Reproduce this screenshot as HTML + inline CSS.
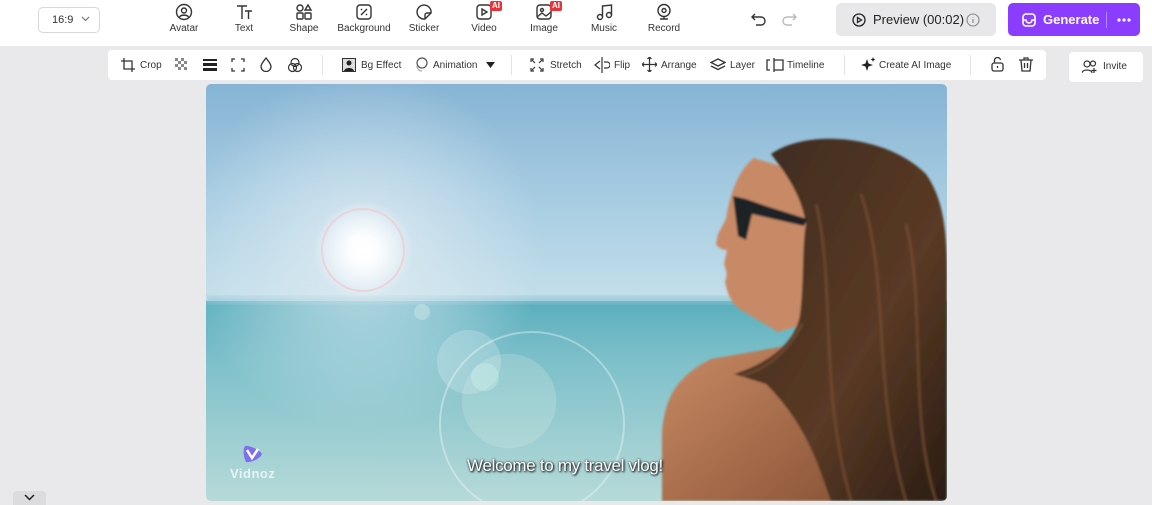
<!DOCTYPE html>
<html><head><meta charset="utf-8">
<style>
*{margin:0;padding:0;box-sizing:border-box}
body{width:1152px;height:505px;overflow:hidden;background:#e9e9eb;font-family:"Liberation Sans",sans-serif;color:#222;position:relative}
.top{position:absolute;left:0;top:0;width:1152px;height:46px;background:#fff}
.ratio{position:absolute;left:38px;top:7px;width:62px;height:26px;border:1px solid #d8d8dc;border-radius:5px;font-size:11px;line-height:24px;padding-left:13px;color:#333}
.ratio svg{position:absolute;right:9px;top:8px}
.tool{position:absolute;top:3px;text-align:center;font-size:10px;color:#333;width:60px;margin-left:-30px}
.tool svg{display:block;margin:0 auto 2px}
.ai{position:absolute;top:-2px;left:36px;background:#e8333b;color:#fff;font-size:8px;font-weight:bold;padding:0 2px;border-radius:2px;line-height:10px}
.prev{position:absolute;left:836px;top:3px;width:160px;height:33px;background:#e8e8ea;border-radius:5px;font-size:13px;line-height:33px;color:#222}
.gen{position:absolute;left:1008px;top:3px;width:132px;height:33px;background:#8b3dff;border-radius:5px;color:#fff;font-size:13px;font-weight:bold;line-height:33px}
.tb{position:absolute;left:108px;top:50px;width:938px;height:30px;background:#fff;border-radius:4px;font-size:10px;color:#333}
.tb span{position:absolute;top:10px;white-space:nowrap}
.tb svg{position:absolute}
.sep{position:absolute;top:5px;width:1px;height:20px;background:#e2e2e4}
.inv{position:absolute;left:1069px;top:52px;width:74px;height:30px;background:#fff;border-radius:4px;font-size:10px;line-height:30px;padding-left:34px;color:#333}
.img{position:absolute;left:206px;top:84px;width:741px;height:417px;border-radius:5px;overflow:hidden}
.cap{position:absolute;left:467px;top:456px;font-size:17px;color:#fff;text-shadow:1px 1px 2px #000,0 0 2px #333;letter-spacing:-0.3px}
.vid{position:absolute;left:230px;top:466px;font-size:13px;color:#e8f3f3;font-weight:bold;letter-spacing:0.5px}
.down{position:absolute;left:13px;top:491px;width:33px;height:14px;background:#dcdcdf;border-radius:4px 4px 0 0}
</style></head><body>
<div class="top">
 <div class="ratio">16:9<svg width="9" height="6" viewBox="0 0 9 6"><path d="M1 1l3.5 3.5L8 1" stroke="#666" fill="none"/></svg></div>
 <div class="tool" style="left:184px"><svg width="18" height="18" viewBox="0 0 18 18" fill="none" stroke="#333" stroke-width="1.4"><circle cx="9" cy="9" r="7.5"/><circle cx="9" cy="7.5" r="2.5"/><path d="M4.5 14c1.5-2.5 7.5-2.5 9 0"/></svg>Avatar</div>
 <div class="tool" style="left:244px"><svg width="18" height="18" viewBox="0 0 18 18" fill="none" stroke="#333" stroke-width="1.4"><path d="M2 3h10M7 3v13M10 8h7M13.5 8v8"/></svg>Text</div>
 <div class="tool" style="left:304px"><svg width="18" height="18" viewBox="0 0 18 18" fill="none" stroke="#333" stroke-width="1.4"><circle cx="5" cy="5" r="3"/><path d="M13 2l3 5h-6z"/><rect x="2" y="10" width="6" height="6" rx="1"/><rect x="10" y="10" width="6" height="6" rx="1"/></svg>Shape</div>
 <div class="tool" style="left:364px"><svg width="18" height="18" viewBox="0 0 18 18" fill="none" stroke="#333" stroke-width="1.4"><rect x="2" y="2" width="14" height="14" rx="3"/><path d="M6 12l6-6M6 7l1-1M11 12l1-1"/></svg>Background</div>
 <div class="tool" style="left:424px"><svg width="18" height="18" viewBox="0 0 18 18" fill="none" stroke="#333" stroke-width="1.4"><path d="M16 10A7 7 0 1 0 10 16zM16 10h-4a2 2 0 0 0-2 2v4"/></svg>Sticker</div>
 <div class="tool" style="left:484px"><svg width="18" height="18" viewBox="0 0 18 18" fill="none" stroke="#333" stroke-width="1.4"><rect x="2" y="2" width="14" height="14" rx="3"/><path d="M7 6v6l5-3z"/></svg>Video<b class="ai">AI</b></div>
 <div class="tool" style="left:544px"><svg width="18" height="18" viewBox="0 0 18 18" fill="none" stroke="#333" stroke-width="1.4"><rect x="2" y="2" width="14" height="14" rx="3"/><circle cx="7" cy="7" r="1.5"/><path d="M2 14l5-4 4 3 5-4"/></svg>Image<b class="ai">AI</b></div>
 <div class="tool" style="left:604px"><svg width="18" height="18" viewBox="0 0 18 18" fill="none" stroke="#333" stroke-width="1.4"><circle cx="5" cy="14" r="2.5"/><circle cx="14" cy="12" r="2.5"/><path d="M7.5 14V3l9-1v10"/></svg>Music</div>
 <div class="tool" style="left:664px"><svg width="18" height="18" viewBox="0 0 18 18" fill="none" stroke="#333" stroke-width="1.4"><circle cx="9" cy="7.5" r="6"/><circle cx="9" cy="7.5" r="2"/><path d="M5 16h8M9 13.5V16"/></svg>Record</div>
 <svg style="position:absolute;left:751px;top:12px" width="16" height="14" viewBox="0 0 16 14" fill="none" stroke="#333" stroke-width="1.4"><path d="M4 2L1 5l3 3M1 5h9a4 4 0 0 1 0 8H5"/></svg>
 <svg style="position:absolute;left:781px;top:12px" width="16" height="14" viewBox="0 0 16 14" fill="none" stroke="#bbb" stroke-width="1.4"><path d="M12 2l3 3-3 3M15 5H6a4 4 0 0 0 0 8h5"/></svg>
 <div class="prev"><svg style="position:absolute;left:16px;top:10px" width="14" height="14" viewBox="0 0 14 14" fill="none" stroke="#222" stroke-width="1.3"><circle cx="7" cy="7" r="6"/><path d="M5.5 4.5v5l4-2.5z"/></svg><span style="position:absolute;left:37px">Preview (00:02)</span><svg style="position:absolute;left:130px;top:10px" width="14" height="14" viewBox="0 0 14 14" fill="none" stroke="#888" stroke-width="1.1"><circle cx="7" cy="7" r="6"/><path d="M7 6v4M7 4v.5"/></svg></div>
 <div class="gen"><svg style="position:absolute;left:14px;top:10px" width="14" height="14" viewBox="0 0 14 14" fill="none" stroke="#fff" stroke-width="1.6"><rect x="1" y="1" width="12" height="12" rx="3"/><path d="M1 7h3a3 3 0 0 0 6 0h3"/></svg><span style="position:absolute;left:35px">Generate</span><i style="position:absolute;left:98px;top:9px;width:1px;height:16px;background:#b58cff"></i><svg style="position:absolute;left:109px;top:15px" width="14" height="4" viewBox="0 0 14 4"><circle cx="2" cy="2" r="1.6" fill="#fff"/><circle cx="7" cy="2" r="1.6" fill="#fff"/><circle cx="12" cy="2" r="1.6" fill="#fff"/></svg></div>
</div>
<div class="tb">
 <svg style="left:13px;top:8px" width="14" height="14" viewBox="0 0 14 14" fill="none" stroke="#333" stroke-width="1.3"><path d="M3 0v11h11M0 3h11v11"/></svg><span style="left:32px">Crop</span>
 <svg style="left:67px;top:8px" width="13" height="14" viewBox="0 0 13 14"><g fill="#888"><rect x="0" y="0" width="3" height="3"/><rect x="6" y="0" width="3" height="3"/><rect x="3" y="3" width="3" height="3"/><rect x="9" y="3" width="3" height="3"/><rect x="0" y="6" width="3" height="3"/><rect x="6" y="6" width="3" height="3"/><rect x="3" y="9" width="3" height="3"/><rect x="9" y="9" width="3" height="3"/></g></svg>
 <svg style="left:95px;top:9px" width="14" height="12" viewBox="0 0 14 12"><rect y="0" width="14" height="2" fill="#222"/><rect y="4" width="14" height="3" fill="#222"/><rect y="9" width="14" height="3" fill="#222"/></svg>
 <svg style="left:123px;top:8px" width="14" height="14" viewBox="0 0 14 14" fill="none" stroke="#333" stroke-width="1.3"><path d="M1 4V1h3M10 1h3v3M13 10v3h-3M4 13H1v-3"/></svg>
 <svg style="left:152px;top:7px" width="12" height="15" viewBox="0 0 12 15" fill="none" stroke="#333" stroke-width="1.3"><path d="M6 1C3 5 1 7 1 9.5a5 5 0 0 0 10 0C11 7 9 5 6 1z"/></svg>
 <svg style="left:179px;top:7px" width="16" height="16" viewBox="0 0 16 16" fill="none" stroke="#333" stroke-width="1.2"><circle cx="8" cy="5.5" r="4"/><circle cx="5.5" cy="10.5" r="4"/><circle cx="10.5" cy="10.5" r="4"/></svg>
 <i class="sep" style="left:214px"></i>
 <svg style="left:234px;top:8px" width="14" height="14" viewBox="0 0 14 14"><rect x="0.5" y="0.5" width="13" height="13" fill="#ddd" stroke="#333"/><circle cx="7" cy="5" r="2.5" fill="#222"/><path d="M2 13c1-4 9-4 10 0z" fill="#222"/></svg><span style="left:253px">Bg Effect</span>
 <svg style="left:306px;top:7px" width="15" height="15" viewBox="0 0 15 15" fill="none" stroke="#555" stroke-width="1.2"><circle cx="8" cy="6" r="5"/><path d="M3 9a5 5 0 0 0 5 5" stroke="#aaa"/></svg><span style="left:325px">Animation</span>
 <svg style="left:378px;top:12px" width="9" height="6" viewBox="0 0 9 6"><path d="M0 0h9L4.5 6z" fill="#222"/></svg>
 <i class="sep" style="left:403px"></i>
 <svg style="left:422px;top:8px" width="14" height="14" viewBox="0 0 14 14" fill="none" stroke="#333" stroke-width="1.2"><path d="M1 4V1h3M10 1h3v3M13 10v3h-3M4 13H1v-3M2 2l3 3M12 2L9 5M12 12l-3-3M2 12l3-3"/></svg><span style="left:442px">Stretch</span>
 <svg style="left:486px;top:7px" width="16" height="16" viewBox="0 0 16 16" fill="none" stroke="#333" stroke-width="1.2"><path d="M8 0v16M6 4L1 8l5 4M10 5h3a3 3 0 0 1 0 6h-3"/></svg><span style="left:506px">Flip</span>
 <svg style="left:534px;top:7px" width="15" height="15" viewBox="0 0 15 15" fill="none" stroke="#333" stroke-width="1.2"><path d="M7.5 0v15M0 7.5h15M5.5 2l2-2 2 2M5.5 13l2 2 2-2M2 5.5l-2 2 2 2M13 5.5l2 2-2 2"/></svg><span style="left:553px">Arrange</span>
 <svg style="left:602px;top:8px" width="16" height="14" viewBox="0 0 16 14" fill="none" stroke="#333" stroke-width="1.3"><path d="M8 1l7 3.5-7 3.5-7-3.5zM1 8l7 3.5L15 8"/></svg><span style="left:622px">Layer</span>
 <svg style="left:658px;top:8px" width="18" height="14" viewBox="0 0 18 14" fill="none" stroke="#333" stroke-width="1.3"><path d="M4 2H1v10h3M8 0v14M8 2h9v10H8"/></svg><span style="left:679px">Timeline</span>
 <i class="sep" style="left:736px"></i>
 <svg style="left:753px;top:7px" width="15" height="15" viewBox="0 0 15 15"><path d="M6 2l1.5 4.5L12 8l-4.5 1.5L6 14l-1.5-4.5L0 8l4.5-1.5z" fill="#222"/><path d="M12 0l.7 1.8 1.8.7-1.8.7L12 5l-.7-1.8-1.8-.7 1.8-.7z" fill="#222"/></svg><span style="left:771px">Create AI Image</span>
 <i class="sep" style="left:862px"></i>
 <svg style="left:883px;top:7px" width="13" height="15" viewBox="0 0 13 15" fill="none" stroke="#333" stroke-width="1.3"><rect x="1" y="6" width="11" height="8" rx="2"/><path d="M3.5 6V4a3 3 0 0 1 6-1"/><path d="M6.5 9v2"/></svg>
 <svg style="left:911px;top:7px" width="14" height="15" viewBox="0 0 14 15" fill="none" stroke="#333" stroke-width="1.3"><path d="M0 3h14M5 3V1h4v2M2 3l1 11h8l1-11M5.5 6v5M8.5 6v5"/></svg>
</div>
<div class="inv"><svg style="position:absolute;left:13px;top:8px" width="16" height="14" viewBox="0 0 16 14" fill="none" stroke="#333" stroke-width="1.2"><circle cx="5" cy="4" r="3"/><path d="M0 13c0-4 10-4 10 0"/><circle cx="11" cy="3.5" r="2.5"/><path d="M12 8v5M9.5 10.5h5"/></svg>Invite</div>
<div class="img">
<svg width="741" height="417" viewBox="0 0 741 417">
<defs>
<linearGradient id="sky" x1="0" y1="0" x2="0" y2="1"><stop offset="0" stop-color="#86b4d4"/><stop offset=".55" stop-color="#a8cde2"/><stop offset="1" stop-color="#c4dfea"/></linearGradient>
<linearGradient id="sea" x1="0" y1="0" x2="0" y2="1"><stop offset="0" stop-color="#5aaebd"/><stop offset=".3" stop-color="#7ec0ca"/><stop offset="1" stop-color="#b6dad8"/></linearGradient>
<radialGradient id="sun"><stop offset="0" stop-color="#fff"/><stop offset=".3" stop-color="#fff" stop-opacity=".9"/><stop offset="1" stop-color="#fff" stop-opacity="0"/></radialGradient>
<radialGradient id="glow"><stop offset="0" stop-color="#e4eef4" stop-opacity=".8"/><stop offset="1" stop-color="#e4eef4" stop-opacity="0"/></radialGradient>
<linearGradient id="hair" x1="0" y1="0" x2="1" y2="1"><stop offset="0" stop-color="#3b2a20"/><stop offset=".6" stop-color="#5a3a25"/><stop offset="1" stop-color="#2a1c14"/></linearGradient>
<linearGradient id="skin" x1="0" y1="0" x2="1" y2="1"><stop offset="0" stop-color="#c98a64"/><stop offset="1" stop-color="#8a5538"/></linearGradient>
<filter id="b2"><feGaussianBlur stdDeviation="2"/></filter>
<filter id="b1"><feGaussianBlur stdDeviation="1"/></filter>
</defs>
<rect width="741" height="218" fill="url(#sky)"/>
<rect y="217" width="741" height="200" fill="url(#sea)"/>
<rect y="212" width="741" height="8" fill="#8cc3d3" filter="url(#b2)" opacity=".6"/>
<circle cx="157" cy="166" r="180" fill="url(#glow)"/>
<circle cx="157" cy="166" r="50" fill="url(#sun)"/>
<circle cx="157" cy="166" r="41" fill="none" stroke="#f4c8d0" stroke-width="2" opacity=".7"/>
<circle cx="216" cy="228" r="8" fill="#fff" opacity=".25"/>
<circle cx="263" cy="278" r="32" fill="#fff" opacity=".2"/>
<circle cx="279" cy="293" r="14" fill="#cfe" opacity=".3"/>
<circle cx="303" cy="317" r="47" fill="#eaf5e8" opacity=".2" stroke="#fff" stroke-opacity=".4"/>
<circle cx="326" cy="340" r="92" fill="none" stroke="#fff" stroke-opacity=".35" stroke-width="2"/>
<g filter="url(#b1)">
<path d="M456 417V350C458 310 475 290 505 275L580 262L625 300L640 417Z" fill="url(#skin)"/>
<path d="M548 74C532 86 524 110 520 135L512 150L510 160C513 165 518 166 521 166L518 180C520 186 522 190 519 198C522 212 526 220 535 226L572 248L600 240L600 90Z" fill="#c88a66"/>
<path d="M565 70C600 45 680 50 720 90C741 120 741 160 741 200V417H625C612 380 600 340 560 300L528 290C560 280 590 260 594 230C598 200 596 160 600 140C595 110 580 90 565 70Z" fill="url(#hair)"/>
<path d="M610 120C630 200 612 300 645 417M655 110C685 200 665 300 700 417M700 140C720 220 702 330 730 417M596 240C580 270 560 285 535 292" stroke="#7a5234" stroke-width="3" fill="none" opacity=".6"/>
<path d="M527 112L532 152L540 156L546 130L598 142L601 135L560 122L540 115Z" fill="#1c2228"/>
</g>
</svg>
</div>
<svg style="position:absolute;left:242px;top:444px" width="22" height="20" viewBox="0 0 22 20"><path d="M3 2C7 1 18 6 20 10C18 15 8 19 4 18C1 12 1 6 3 2Z" fill="#7d6ff0"/><path d="M5 6l5 8 6-9" stroke="#fff" stroke-width="2.5" fill="none"/></svg>
<div class="vid">Vidnoz</div>
<div class="cap">Welcome to my travel vlog!</div>
<div class="down"><svg style="position:absolute;left:11px;top:3px" width="11" height="7" viewBox="0 0 11 7"><path d="M1 1l4.5 4.5L10 1" stroke="#222" stroke-width="1.5" fill="none"/></svg></div>
</body></html>
